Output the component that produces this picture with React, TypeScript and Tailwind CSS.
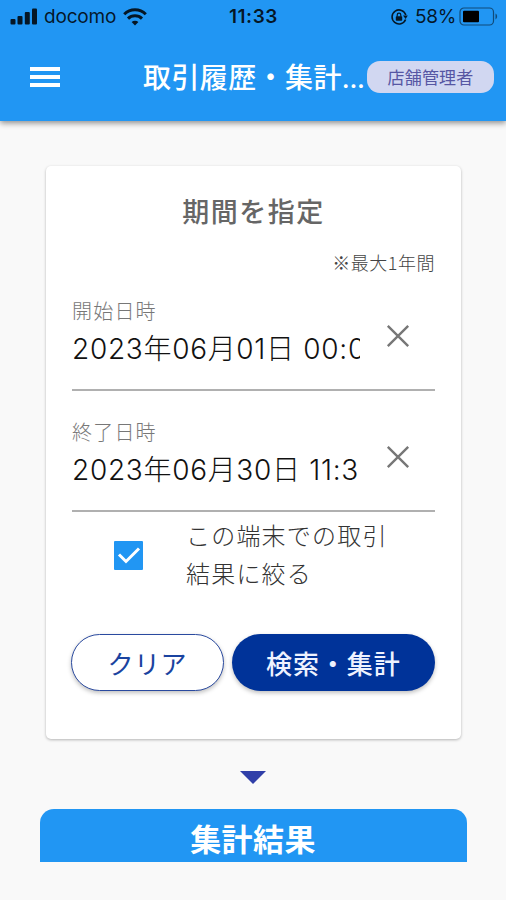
import React from 'react';

interface DateFieldProps {
  label: string;
  value: string;
}

const StatusBar: React.FC = () => (
  <div className="relative flex h-[33px] items-center justify-between pl-2.5 pr-2 font-['Inter','Liberation_Sans',sans-serif] text-black/85">
    <div className="flex items-center">
      <svg width="27" height="17" viewBox="0 0 27 17" fill="currentColor">
        <rect x="0.5" y="11" width="5" height="5.5" rx="1" />
        <rect x="7.5" y="8" width="5" height="8.5" rx="1" />
        <rect x="14.8" y="4" width="5" height="12.5" rx="1" />
        <rect x="22" y="0.5" width="5" height="16" rx="1" />
      </svg>
      <span className="ml-[7px] w-[72px] whitespace-nowrap text-[19px] leading-none tracking-[-0.2px]">docomo</span>
      <svg className="ml-[7px]" width="24" height="18" viewBox="0 0 24 18" fill="none" stroke="currentColor" strokeWidth="3">
        <path d="M1.2 6.2a15.4 15.4 0 0 1 21.6 0" />
        <path d="M5 10.6a10 10 0 0 1 14 0" />
        <path d="M12 17.6l-3.4-3.6a4.9 4.9 0 0 1 6.8 0z" fill="currentColor" stroke="none" />
      </svg>
    </div>
    <span className="absolute left-[229px] top-[7px] text-[19px] font-semibold leading-5 tracking-[0.5px]">11:33</span>
    <div className="flex items-center">
      <svg width="18" height="18" viewBox="0 0 18 18" fill="none" stroke="currentColor" strokeWidth="1.6">
        <path d="M15.6 11.5A7 7 0 1 1 15.8 7" />
        <path d="M13 7.6h4.8l-2.2 3.4z" fill="currentColor" stroke="none" />
        <rect x="5.8" y="8.2" width="6.4" height="4.6" rx="0.8" fill="currentColor" stroke="none" />
        <path d="M7.2 8.5V6.9a1.8 1.8 0 0 1 3.6 0v1.6" strokeWidth="1.2" />
      </svg>
      <span className="ml-[7px] w-[42px] whitespace-nowrap text-[19px] leading-none tracking-[-0.3px]">58%</span>
      <svg className="ml-0.5" width="39" height="19" viewBox="0 0 39 19">
        <rect x="1" y="1" width="33.5" height="17" rx="4" fill="none" stroke="#000" strokeOpacity="0.5" strokeWidth="1.2" />
        <rect x="4" y="3.8" width="16" height="11.4" rx="1" fill="#000" />
        <path d="M36.5 6.6c2.2 1.1 2.2 4.7 0 5.8z" fill="#000" fillOpacity="0.5" />
      </svg>
    </div>
  </div>
);

const Header: React.FC = () => (
  <header className="h-[121px] bg-[#2196f3] shadow-[0_2px_6px_rgba(0,0,0,0.45)]">
    <StatusBar />
    <div className="flex h-[88px] items-center pl-[30px] pr-3">
      <button aria-label="menu" className="flex w-[30px] flex-col gap-1">
        <span className="h-1 bg-white" />
        <span className="h-1 bg-white" />
        <span className="h-1 bg-white" />
      </button>
      <h1 className="ml-[83px] w-[224px] whitespace-nowrap text-[28px] font-medium leading-[40px] tracking-[0.4px] text-white">
        取引履歴・集計<span className="font-['Inter'] text-[26px] tracking-[-0.3px]">...</span>
      </h1>
      <span className="flex h-8 w-[127px] items-center justify-center rounded-[13px] bg-[#d1d7f1] text-[17px] tracking-[0.2px] text-[#5656a3]">
        店舗管理者
      </span>
    </div>
  </header>
);

const DateField: React.FC<DateFieldProps> = ({ label, value }) => (
  <div className="flex h-[95px] items-start border-b-2 border-[#b0b0b0]">
    <div className="w-[288px]">
      <div className="text-[20px] font-light leading-[30px] tracking-[1.2px] text-[#777]">{label}</div>
      <div className="mt-[3px] overflow-hidden whitespace-nowrap font-['Inter','Noto_Sans_CJK_JP',sans-serif] text-[28px] font-light leading-[40px] tracking-[0.7px] text-[#111]">
        {value}
      </div>
    </div>
    <button aria-label="clear" className="ml-[26px] mt-[28px]">
      <svg width="24" height="24" viewBox="0 0 24 24" stroke="#777" strokeWidth="2.4">
        <path d="M1.8 1.8l20.4 20.4M22.2 1.8L1.8 22.2" />
      </svg>
    </button>
  </div>
);

const App: React.FC = () => {
  return (
    <div className="h-[900px] w-[506px] overflow-hidden bg-[#f9f9f9] font-['Noto_Sans_CJK_JP',sans-serif]">
      <Header />

      <section className="ml-[46px] mt-[45px] h-[573px] w-[415px] rounded-[5px] bg-white px-[26px] pt-[25px] shadow-[0_1px_3px_rgba(0,0,0,0.28)]">
        <h2 className="text-center text-[27px] font-medium leading-[40px] tracking-[1.5px] text-[#666]">期間を指定</h2>
        <p className="mt-[17px] text-right text-[18px] font-light leading-[28px] tracking-[0.5px] text-[#444]">※最大1年間</p>

        <div className="mt-[20px] flex flex-col gap-[26px]">
          <DateField label="開始日時" value="2023年06月01日 00:00" />
          <DateField label="終了日時" value="2023年06月30日 11:33" />
        </div>

        <label className="mt-[5px] flex h-[76px] items-center">
          <span className="ml-[42px] flex h-[29px] w-[29px] items-center justify-center rounded-[1px] bg-[#2196f3]">
            <svg width="24" height="20" viewBox="0 0 24 20" fill="none" stroke="#fff" strokeWidth="3">
              <path d="M2 9.5l7 7L22 3.5" />
            </svg>
          </span>
          <span className="-mt-0.5 ml-[43px] whitespace-nowrap text-[24px] font-light leading-[38px] tracking-[1.2px] text-[#333]">
            この端末での取引
            <br />
            結果に絞る
          </span>
        </label>

        <div className="-ml-px mt-[41px] flex gap-2">
          <button className="h-[57px] w-[153px] rounded-full border-[1.5px] border-[#2a4a9f] bg-white text-[26px] leading-none tracking-[0.5px] text-[#1a43a0] shadow-[0_2px_4px_rgba(0,0,0,0.25)]">
            クリア
          </button>
          <button className="h-[57px] w-[204px] rounded-full bg-[#003399] text-[26px] font-medium leading-none tracking-[0.9px] text-[#eef2ff] shadow-[0_2px_4px_rgba(0,0,0,0.25)]">
            検索・集計
          </button>
        </div>
      </section>

      <svg className="mx-auto mt-8" width="26" height="13" viewBox="0 0 26 13" fill="#303fa8">
        <path d="M0 0h26L13 13z" />
      </svg>

      <div className="mx-auto mt-[25px] flex h-[53px] w-[427px] items-center justify-center rounded-t-[14px] bg-[#2196f3] pt-1 text-[31px] font-bold leading-none tracking-[0.4px] text-white">
        集計結果
      </div>
    </div>
  );
};

export default App;
